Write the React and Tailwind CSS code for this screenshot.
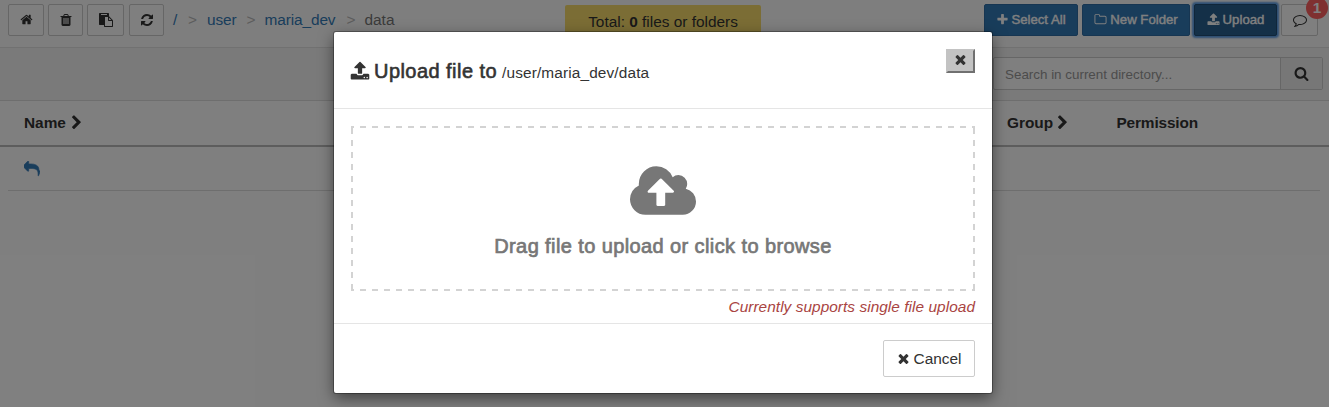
const paths = {
  home: "M1472 992v480q0 26-19 45t-45 19h-384v-384h-256v384h-384q-26 0-45-19t-19-45v-480q0-1 .5-3t.5-3l575-474 575 474q1 2 1 6zm223-69l-62 74q-8 9-21 11h-3q-13 0-21-7l-692-577-692 577q-12 8-24 7-13-2-21-11l-62-74q-8-10-7-23.5t11-21.5l719-599q32-26 76-26t76 26l244 204v-195q0-14 9-23t23-9h192q14 0 23 9t9 23v408l219 182q10 8 11 21.5t-7 23.5z",
  trash: "M704 1376v-704q0-14-9-23t-23-9h-64q-14 0-23 9t-9 23v704q0 14 9 23t23 9h64q14 0 23-9t9-23zm256 0v-704q0-14-9-23t-23-9h-64q-14 0-23 9t-9 23v704q0 14 9 23t23 9h64q14 0 23-9t9-23zm256 0v-704q0-14-9-23t-23-9h-64q-14 0-23 9t-9 23v704q0 14 9 23t23 9h64q14 0 23-9t9-23zm-544-992h448l-48-117q-7-9-17-11h-317q-10 2-17 11zm928 32v64q0 14-9 23t-23 9h-96v948q0 83-47 143.5t-113 60.5h-832q-66 0-113-58.5t-47-141.5v-952h-96q-14 0-23-9t-9-23v-64q0-14 9-23t23-9h309l70-167q15-37 54-63t79-26h320q40 0 79 26t54 63l70 167h309q14 0 23 9t9 23z",
  paste: "M768 1664h896v-640h-416q-40 0-68-28t-28-68v-416h-384v1152zm256-1440v-64q0-13-9.5-22.5t-22.5-9.5h-704q-13 0-22.5 9.5t-9.5 22.5v64q0 13 9.5 22.5t22.5 9.5h704q13 0 22.5-9.5t9.5-22.5zm256 672h299l-299-299v299zm512 128v672q0 40-28 68t-68 28h-960q-40 0-68-28t-28-68v-160h-544q-40 0-68-28t-28-68v-1344q0-40 28-68t68-28h1088q40 0 68 28t28 68v328q21 13 36 28l408 408q28 28 48 76t20 88z",
  refresh: "M1639 1056q0 5-1 7-64 268-268 434.5t-478 166.5q-146 0-282.5-55t-243.5-157l-129 129q-19 19-45 19t-45-19-19-45v-448q0-26 19-45t45-19h448q26 0 45 19t19 45-19 45l-137 137q71 66 161 102t187 36q134 0 250-65t186-179q11-17 53-117 8-23 30-23h192q13 0 22.5 9.5t9.5 22.5zm25-800v448q0 26-19 45t-45 19h-448q-26 0-45-19t-19-45 19-45l138-138q-148-137-349-137-134 0-250 65t-186 179q-11 17-53 117-8 23-30 23h-199q-13 0-22.5-9.5t-9.5-22.5v-7q65-268 270-434.5t480-166.5q146 0 284 55.5t245 156.5l130-129q19-19 45-19t45 19 19 45z",
  plus: "M1600 736v192q0 40-28 68t-68 28h-416v416q0 40-28 68t-68 28h-192q-40 0-68-28t-28-68v-416h-416q-40 0-68-28t-28-68v-192q0-40 28-68t68-28h416v-416q0-40 28-68t68-28h192q40 0 68 28t28 68v416h416q40 0 68 28t28 68z",
  folder: "M1600 1312v-704q0-40-28-68t-68-28h-704q-40 0-68-28t-28-68v-64q0-40-28-68t-68-28h-320q-40 0-68 28t-28 68v960q0 40 28 68t68 28h1216q40 0 68-28t28-68zm128-704v704q0 92-66 158t-158 66h-1216q-92 0-158-66t-66-158v-960q0-92 66-158t158-66h320q92 0 158 66t66 158v32h672q92 0 158 66t66 158z",
  upload: "M1344 1472q0-26-19-45t-45-19-45 19-19 45 19 45 45 19 45-19 19-45zm256 0q0-26-19-45t-45-19-45 19-19 45 19 45 45 19 45-19 19-45zm128-224v320q0 40-28 68t-68 28h-1472q-40 0-68-28t-28-68v-320q0-40 28-68t68-28h427q21 56 70.5 92t110.5 36h256q61 0 110.5-36t70.5-92h427q40 0 68 28t28 68zm-325-648q-17 40-59 40h-256v448q0 26-19 45t-45 19h-256q-26 0-45-19t-19-45v-448h-256q-42 0-59-40-17-39 14-69l448-448q18-19 45-19t45 19l448 448q31 30 14 69z",
  comment: "M896 384q-204 0-381.5 69.5t-282 187.5-104.5 255q0 112 71.5 213.5t201.5 175.5l87 50-27 96q-24 91-70 172 152-63 275-171l43-38 57 6q69 8 130 8 204 0 381.5-69.5t282-187.5 104.5-255-104.5-255-282-187.5-381.5-69.5zm896 512q0 174-120 321.5t-326 233-450 85.5q-70 0-145-8-198 175-460 242-49 14-114 22h-5q-15 0-27-10.5t-16-27.5v-1q-3-4-.5-12t2-10 4.5-9.5l6-9 7-8.5 8-9q7-8 31-34.5t34.5-38 31-39.5 32.5-51 27-59 26-76q-157-89-247.5-220t-90.5-281q0-130 71-248.5t191-204.5 286-136.5 348-50.5 348 50.5 286 136.5 191 204.5 71 248.5z",
  search: "M1216 832q0-185-131.5-316.5t-316.5-131.5-316.5 131.5-131.5 316.5 131.5 316.5 316.5 131.5 316.5-131.5 131.5-316.5zm512 832q0 52-38 90t-90 38q-54 0-90-38l-343-342q-179 124-399 124-143 0-273.5-55.5t-225-150-150-225-55.5-273.5 55.5-273.5 150-225 225-150 273.5-55.5 273.5 55.5 225 150 150 225 55.5 273.5q0 220-124 399l343 343q37 37 37 90z",
  chevron: "M1363 877l-742 742q-19 19-45 19t-45-19l-166-166q-19-19-19-45t19-45l531-531-531-531q-19-19-19-45t19-45l166-166q19-19 45-19t45 19l742 742q19 19 19 45t-19 45z",
  reply: "M1792 1120q0 166-127 451-3 7-10.5 24t-13.5 30-13 22q-12 17-28 17-15 0-23.5-10t-8.5-25q0-9 2.5-26.5t2.5-23.5q5-68 5-123 0-112-19.5-200.5t-54-153.5-89-112-118-77.5-153.5-46-181.5-21.5-213.5-6h-224v256q0 26-19 45t-45 19-45-19l-512-512q-19-19-19-45t19-45l512-512q19-19 45-19t45 19 19 45v256h224q713 0 875 403 53 134 53 333z",
  times: "M1490 1322q0 40-28 68l-136 136q-28 28-68 28t-68-28l-294-294-294 294q-28 28-68 28t-68-28l-136-136q-28-28-28-68t28-68l294-294-294-294q-28-28-28-68t28-68l136-136q28-28 68-28t68 28l294 294 294-294q28-28 68-28t68 28l136 136q28 28 28 68t-28 68l-294 294 294 294q28 28 28 68z",
  cloud: "M1216 864q0-14-9-23l-352-352q-9-9-23-9t-23 9l-351 351q-10 12-10 24 0 14 9 23t23 9h224v352q0 13 9.5 22.5t22.5 9.5h192q13 0 22.5-9.5t9.5-22.5v-352h224q13 0 22.5-9.5t9.5-22.5zm640 288q0 159-112.5 271.5t-271.5 112.5h-1088q-185 0-316.5-131.5t-131.5-316.5q0-130 70-240t188-165q-2-30-2-43 0-212 150-362t362-150q156 0 285.5 87t188.5 231q71-62 166-62 106 0 181 75t75 181q0 76-41 138 130 31 213.5 135.5t83.5 238.5z",
};

function Icon({ name, className = "size-[13px]", box = "0 0 1792 1792" }) {
  return (
    <svg viewBox={box} className={`shrink-0 fill-current ${className}`} aria-hidden="true">
      <path d={paths[name]} />
    </svg>
  );
}

function ToolButton({ icon, className, iconClass }) {
  return (
    <button className={`flex h-8 shrink-0 items-center justify-center rounded-[2px] border border-[#ccc] bg-white pb-px ${className}`}>
      <Icon name={icon} className={iconClass} />
    </button>
  );
}

function Toolbar() {
  return (
    <header className="flex h-12 items-start border-b border-[#e3e3e3] bg-[#fdfdfd] pt-1 pl-2">
      <div className="flex w-[557px] shrink-0 items-start">
        <ToolButton icon="home" className="mr-1 w-9" iconClass="size-[13px]" />
        <ToolButton icon="trash" className="mr-1 w-[35px]" iconClass="size-[14px]" />
        <ToolButton icon="paste" className="mr-[5px] w-[37px]" iconClass="size-[14px]" />
        <ToolButton icon="refresh" className="mr-[9px] w-[35px]" iconClass="size-[14px]" />
        <nav className="flex h-8 items-center whitespace-nowrap text-[15.4px] text-[#337ab7]">
          <a className="w-[15px]">/</a>
          <span className="w-[19px] text-[#bbb]">&gt;</span>
          <a className="w-[39.5px] tracking-[-0.1px]">user</a>
          <span className="w-[18px] text-[#bbb]">&gt;</span>
          <a className="w-[82px] tracking-[-0.1px]">maria_dev</a>
          <span className="w-[18px] text-[#bbb]">&gt;</span>
          <span className="text-[#777]">data</span>
        </nav>
      </div>
      <div className="mt-px flex h-8 w-[196px] shrink-0 justify-center rounded-[2px] bg-[#f6db6b] pt-[6px] text-[15.4px] leading-[22px] whitespace-pre">
        Total: <b>0</b> files or folders
      </div>
      <div className="ml-[223px] flex shrink-0 text-[13.2px] text-white [-webkit-text-stroke:0.4px]">
        <button className="mr-1 flex h-8 w-[94px] items-center justify-center gap-[2px] rounded-[2px] border border-[#2e6da4] bg-[#337ab7] pb-px">
          <Icon name="plus" className="size-[13px]" />Select All
        </button>
        <button className="mr-1 flex h-8 w-[108px] items-center justify-center gap-[3px] rounded-[2px] border border-[#2e6da4] bg-[#337ab7] pb-px">
          <Icon name="folder" className="size-[13px]" />New Folder
        </button>
        <button className="mr-1 flex h-8 w-[83px] items-center justify-center gap-[3px] rounded-[2px] border border-[#204d74] bg-[#286090] pb-px shadow-[0_0_2px_2px_#5b9de8]">
          <Icon name="upload" className="size-[13px]" />Upload
        </button>
      </div>
      <div className="relative flex h-8 w-[37px] shrink-0 items-center justify-center rounded-[2px] border border-[#ccc] bg-white pb-px">
        <Icon name="comment" className="size-[14px]" />
        <span className="absolute -top-[8px] left-[24px] flex size-[22px] items-center justify-center rounded-full bg-[#ff6060] pb-px text-[15.4px] font-bold text-white">1</span>
      </div>
    </header>
  );
}

function FilePage() {
  return (
    <div className="h-[407px] overflow-hidden bg-white text-[#333]">
      <Toolbar />
      <div className="flex h-[53px] justify-end border-b border-[#ddd] bg-[#f5f5f5] pt-[9px] pr-1.5">
        <div className="flex h-[33px] w-[330px] rounded-[2px] border border-[#ccc] bg-white">
          <span className="flex flex-1 items-center pt-[3px] pl-[11px] text-[13.4px] text-[#999]">Search in current directory...</span>
          <span className="flex w-[42px] items-center justify-center border-l border-[#ccc] bg-[#eee]">
            <Icon name="search" className="size-[15px]" />
          </span>
        </div>
      </div>
      <div className="flex h-[46px] items-center border-b-2 border-[#bbb] pl-6 text-[15.4px] font-bold">
        <div className="flex w-[983px] items-center gap-[3px]">Name<Icon name="chevron" className="size-[15.4px]" /></div>
        <div className="flex w-[109.5px] items-center gap-[2px]">Group<Icon name="chevron" className="size-[15.4px]" /></div>
        <div className="tracking-[-0.15px]">Permission</div>
      </div>
      <div className="mr-[9px] ml-2 flex h-11 items-center border-b border-[#ddd] pl-4 text-[#337ab7]">
        <Icon name="reply" className="size-4 stroke-current [stroke-width:70]" />
      </div>
    </div>
  );
}

const dashedFrame =
  "bg-[image:repeating-linear-gradient(90deg,#d3d3d3_0_3px,transparent_3px_9px,#d3d3d3_9px_12px),repeating-linear-gradient(90deg,#d3d3d3_0_3px,transparent_3px_9px,#d3d3d3_9px_12px),repeating-linear-gradient(180deg,transparent_0_2px,#d3d3d3_2px_8px,transparent_8px_12px),repeating-linear-gradient(180deg,transparent_0_2px,#d3d3d3_2px_8px,transparent_8px_12px)] [background-size:100%_2px,100%_2px,2px_100%,2px_100%] [background-position:left_top,left_bottom,left_top,right_top] bg-no-repeat";

function UploadDialog() {
  return (
    <section role="dialog" className="mt-8 ml-[334px] flex h-[361px] w-[658px] flex-col rounded-[2px] bg-white text-[#333] shadow-[0_0_0_1px_rgba(0,0,0,0.3),0_5px_15px_rgba(0,0,0,0.5)]">
      <div className="flex h-[77px] items-start border-b border-[#e5e5e5] px-[17px] pt-[17px]">
        <h4 className="flex flex-1 items-baseline pt-2 leading-7 whitespace-nowrap">
          <Icon name="upload" className="mr-[4px] -ml-px size-[20px] translate-y-[3px]" />
          <span className="mr-[5px] text-[20px] tracking-[0.45px] [-webkit-text-stroke:0.6px]">Upload file to</span>
          <span className="text-[15.4px] tracking-[0.13px]">/user/maria_dev/data</span>
        </h4>
        <button className="flex h-6 w-[29px] items-center justify-center border-2 border-t-[#c3c3c3] border-r-[#707070] border-b-[#707070] border-l-[#c3c3c3] bg-[#c3c3c3] pb-[3px]">
          <Icon name="times" className="size-[15px]" />
        </button>
      </div>
      <div className="h-[215px] border-b border-[#e5e5e5] px-[17px] pt-[17px]">
        <div className={`flex h-[165px] flex-col items-center pt-10 text-[#777] ${dashedFrame}`}>
          <Icon name="cloud" box="-64 128 1920 1408" className="h-[49px] w-[66px]" />
          <p className="mt-[17px] text-[20px] leading-7 tracking-[0.4px] whitespace-nowrap [-webkit-text-stroke:0.7px]">Drag file to upload or click to browse</p>
        </div>
        <p className="pt-[5px] text-right text-[15.4px] leading-[22px] tracking-[0.05px] text-[#a94442] italic">Currently supports single file upload</p>
      </div>
      <div className="flex justify-end px-[17px] pt-4">
        <button className="flex h-[37px] w-[92px] items-center justify-center gap-[3px] rounded-[2px] border border-[#ccc] bg-white pr-px text-[15.4px]">
          <Icon name="times" className="size-[15px]" />Cancel
        </button>
      </div>
    </section>
  );
}

export default function App() {
  return (
    <main className="relative h-[407px] overflow-hidden font-['Liberation_Sans',Arial,sans-serif]">
      <FilePage />
      <div className="absolute inset-0 bg-black/50">
        <UploadDialog />
      </div>
    </main>
  );
}
